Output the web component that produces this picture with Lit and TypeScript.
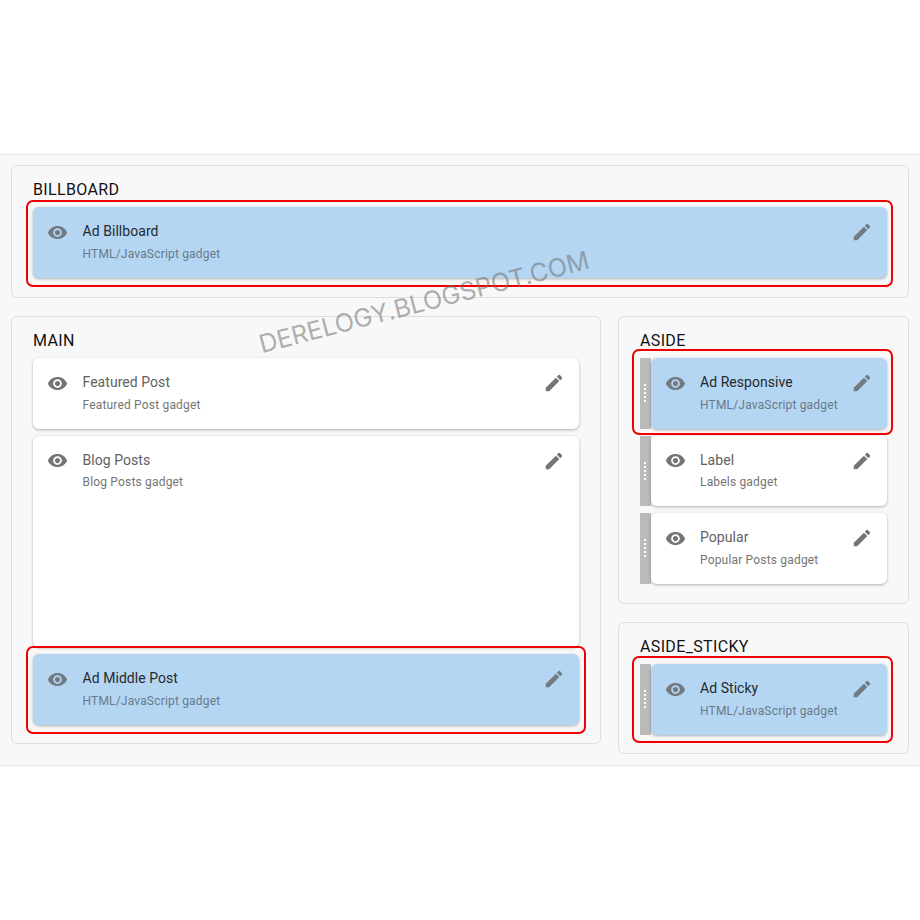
import { LitElement, html, css, nothing } from "lit";
import { customElement, property } from "lit/decorators.js";

const eye = html`<svg class="ico eye" viewBox="0 0 24 24"><path d="M12 4.5C7 4.5 2.73 7.61 1 12c1.73 4.39 6 7.5 11 7.5s9.27-3.11 11-7.5c-1.73-4.39-6-7.5-11-7.5zM12 17c-2.76 0-5-2.24-5-5s2.24-5 5-5 5 2.24 5 5-2.24 5-5 5zm0-8c-1.66 0-3 1.34-3 3s1.34 3 3 3 3-1.34 3-3-1.34-3-3-3z"/></svg>`;
const pencil = html`<svg class="ico pen" viewBox="0 0 24 24"><path d="M3 17.25V21h3.75L17.81 9.94l-3.75-3.75L3 17.25zM20.71 7.04c.39-.39.39-1.02 0-1.41l-2.34-2.34c-.39-.39-1.02-.39-1.41 0l-1.83 1.83 3.75 3.75 1.83-1.83z"/></svg>`;

@customElement("gadget-card")
class GadgetCard extends LitElement {
  @property() name = "";
  @property() sub = "";
  @property({ type: Boolean }) ad = false;
  @property({ type: Boolean }) handle = false;
  @property({ type: Number }) h = 70.5;

  static styles = css`
    :host { display: block; position: relative; }
    .row { display: flex; align-items: stretch; }
    .handle {
      width: 11px; flex: none; background: #bababa; box-sizing: border-box; padding-left: 4px;
      display: flex; flex-direction: column; align-items: flex-start; justify-content: center; gap: 2px;
    }
    .handle i { width: 2px; height: 2px; background: #fff; display: block; }
    .card {
      flex: 1; min-width: 0; box-sizing: border-box; background: #fff; border-radius: 6px;
      box-shadow: 0 1px 3px rgba(0,0,0,.3);
      display: flex; align-items: flex-start; padding: 13px 13px 0 13px;
    }
    .card.ad { background: #b4d6f3; }
    .ico { fill: #757575; flex: none; display: block; }
    .ico.eye { width: 21px; height: 21px; margin: 1.5px 0 0 1px; }
    .ico.pen { width: 22px; height: 22px; margin: 1px 1px 0 0; }
    .card.ad .ico { fill: #727b82; }
    .text { flex: 1; margin-left: 14.5px; font-family: Roboto, sans-serif; min-width: 0; }
    .handle + .card .text { margin-left: 14px; }
    .name { font-size: 14px; line-height: 20px; color: #616161; letter-spacing: 0.05px; margin-top: 1px; }
    .card.ad .name { color: #26292c; }
    .sub { font-size: 12px; line-height: 16px; color: #757575; margin-top: 4.5px; letter-spacing: 0.18px; }
    .card.ad .sub { color: #697a89; }
  `;

  render() {
    return html`<div class="row">
      ${this.handle ? html`<div class="handle"><i></i><i></i><i></i><i></i><i></i></div>` : nothing}
      <div class="card ${this.ad ? "ad" : ""}" style="height:${this.h}px">
        ${eye}
        <div class="text"><div class="name">${this.name}</div><div class="sub">${this.sub}</div></div>
        ${pencil}
      </div>
    </div>`;
  }
}

const AD = "HTML/JavaScript gadget";

@customElement("app-root")
class AppRoot extends LitElement {
  static styles = css`
    :host { display: block; width: 920px; height: 920px; background: #fff; overflow: hidden; position: relative; }
    .page {
      margin-top: 154px; box-sizing: border-box; height: 612px;
      background: #f8f8f8; border: 1px solid #e9e9e9; border-left: 0; border-right: 0;
      padding: 10px 11px 0 11px;
      display: grid; grid-template-columns: 590px 291px; column-gap: 17px; row-gap: 18px;
      align-content: start;
    }
    .section {
      box-sizing: border-box; border: 1px solid #dedede; border-radius: 6px;
      padding: 15px 21px 19px 21px; background: #f8f8f8;
    }
    .wide { grid-column: 1 / 3; height: 133px; }
    .main { height: 428px; }
    .side { display: flex; flex-direction: column; gap: 18px; }
    .aside { height: 288px; }
    .sticky { height: 132px; }
    h2 {
      margin: 0 0 8px 0; font: 400 16px/18px Roboto, sans-serif; color: #111; letter-spacing: 0.35px;
    }
    .stack { display: flex; flex-direction: column; gap: 7px; }
    .mark { position: relative; }
    .mark::after {
      content: ""; position: absolute; pointer-events: none; box-sizing: border-box;
      top: -8px; bottom: -9px; left: -7px; right: -7px;
      border: 2px solid #f00000; border-radius: 7px;
    }
    .mark.narrow::after { left: -8px; right: -6px; top: -9px; bottom: -6px; }
    .mark.sticky-mark::after { left: -8px; right: -6px; bottom: -8px; }
    .mark.top::after { right: -6px; top: -7px; }
    .watermark {
      position: absolute; left: 254px; top: 286px; transform: rotate(-14.5deg); transform-origin: center;
      font: 400 25.2px/32px Inter, sans-serif; color: rgba(110,110,110,.55); white-space: nowrap;
    }
  `;

  render() {
    return html`<div class="page">
        <section class="section wide">
          <h2>BILLBOARD</h2>
          <div class="mark top"><gadget-card ad name="Ad Billboard" sub=${AD}></gadget-card></div>
        </section>
        <section class="section main">
          <h2>MAIN</h2>
          <div class="stack">
            <gadget-card name="Featured Post" sub="Featured Post gadget"></gadget-card>
            <gadget-card name="Blog Posts" sub="Blog Posts gadget" h="211.5"></gadget-card>
            <div class="mark"><gadget-card ad name="Ad Middle Post" sub=${AD}></gadget-card></div>
          </div>
        </section>
        <div class="side">
          <section class="section aside">
            <h2>ASIDE</h2>
            <div class="stack">
              <div class="mark narrow"><gadget-card ad handle name="Ad Responsive" sub=${AD}></gadget-card></div>
              <gadget-card handle name="Label" sub="Labels gadget"></gadget-card>
              <gadget-card handle name="Popular" sub="Popular Posts gadget"></gadget-card>
            </div>
          </section>
          <section class="section sticky">
            <h2>ASIDE_STICKY</h2>
            <div class="mark sticky-mark"><gadget-card ad handle name="Ad Sticky" sub=${AD}></gadget-card></div>
          </section>
        </div>
      </div>
      <div class="watermark">DERELOGY.BLOGSPOT.COM</div>`;
  }
}
